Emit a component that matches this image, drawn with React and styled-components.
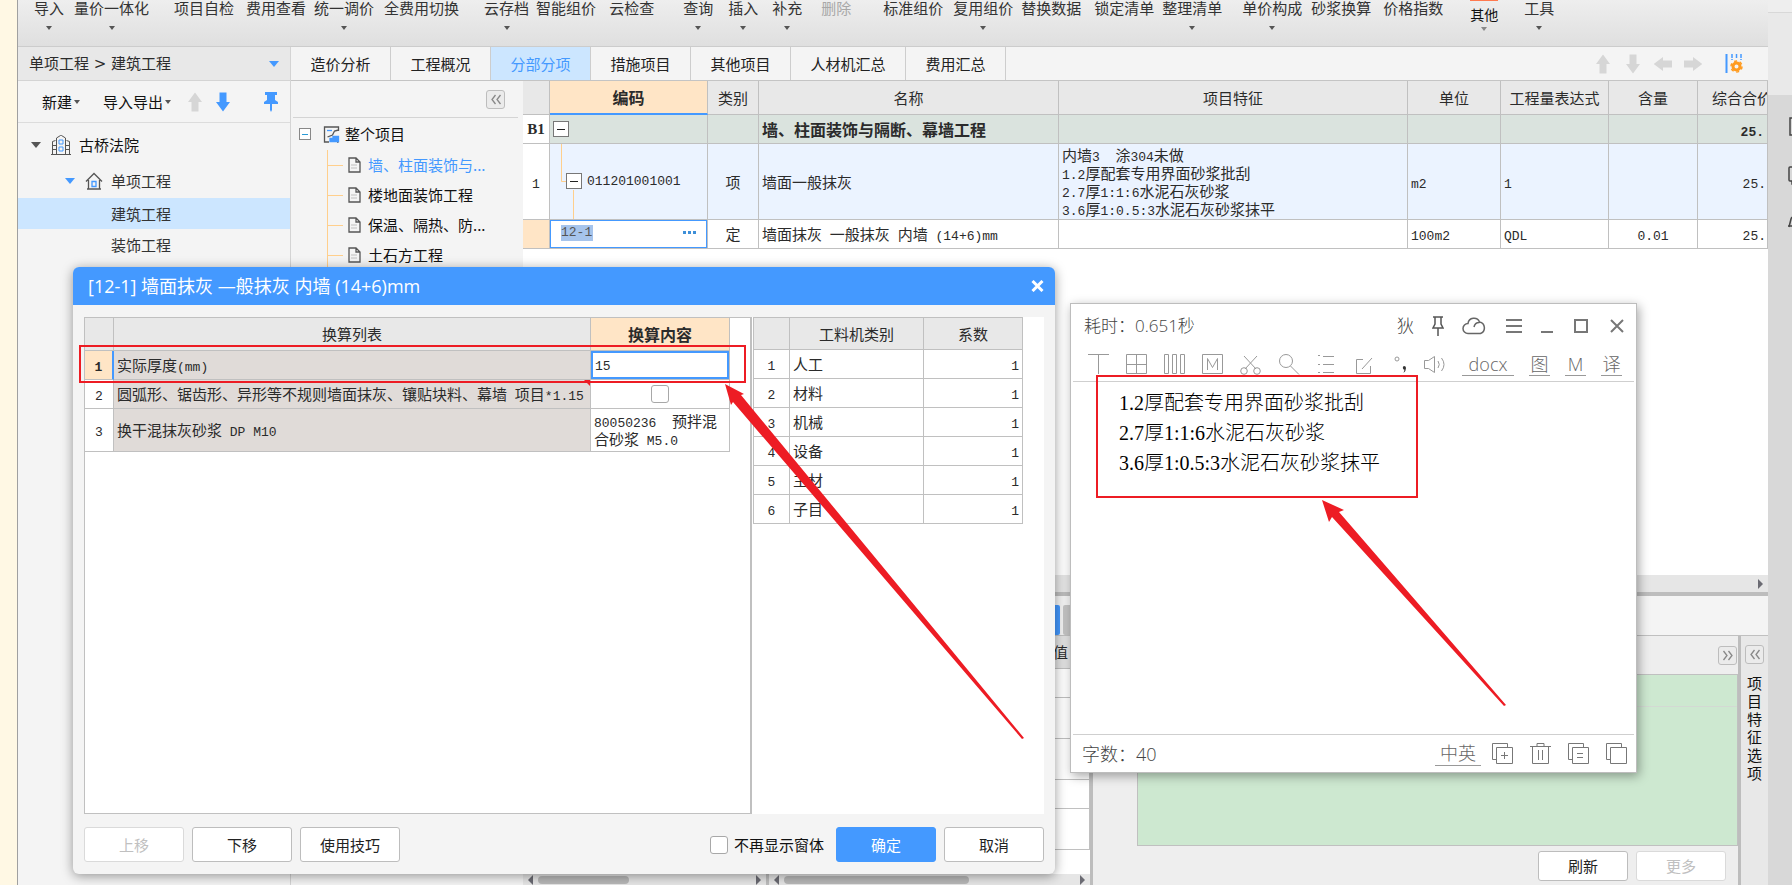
import React from "react";
import styled, { createGlobalStyle, css } from "styled-components";

const BLUE = "#4499ff";
const LINE = "#c0c0c0";
const UI = `"Noto Sans CJK SC", sans-serif`;

const Global = createGlobalStyle`
  *, *::before, *::after { box-sizing: border-box; }
  body { margin: 0; background: #f4f4f4; font-family: ${UI}; font-size: 15px; line-height: 18px; color: #2b2b2b; }
  button, input, select, textarea { font: inherit; color: inherit; margin: 0; }
  button { padding: 0; border: 0; background: none; white-space: nowrap; cursor: pointer; }
  ul { list-style: none; margin: 0; padding: 0; }
  svg { display: block; flex: none; }
`;

/* ---------- shell ---------- */

const Page = styled.div`
  position: relative;
  display: flex;
  min-height: 100vh;
  overflow: hidden;
`;
const CreamEdge = styled.div`
  flex: none;
  width: 18px;
  background: #fff8e4;
  border-right: 1px solid #a0a0a0;
`;
const Shell = styled.div`
  flex: 1;
  min-width: 0;
  display: flex;
  flex-direction: column;
`;
const Body = styled.div`
  flex: 1;
  display: flex;
  min-height: 0;
`;
const RightColumn = styled.div`
  flex: 1;
  min-width: 0;
  display: flex;
  flex-direction: column;
`;
const DesktopEdge = styled.aside`
  flex: none;
  width: 24px;
  background: #d8d8d8;
  overflow: hidden;
`;
const EdgeTop = styled.div`
  height: 13px;
  background: #eeeeee;
  border-bottom: 1px solid #d8d8d8;
`;
const EdgeMid = styled.div`
  height: 82px;
  background: #e9e9e9;
  margin-bottom: 22px;
`;
const EdgeIcon = styled.div`
  height: 49px;
  padding-left: 20px;
`;

/* ---------- ribbon ---------- */

const Ribbon = styled.header`
  display: flex;
  align-items: flex-start;
  height: 47px;
  padding-left: 16px;
  background: linear-gradient(#eeeeee, #dfdfdf);
  border-bottom: 1px solid #cccccc;
`;
const RibbonButton = styled.button`
  flex: none;
  display: flex;
  flex-direction: column;
  align-items: center;
  gap: 10px;
  margin-left: ${(p) => p.$gap}px;
  line-height: 16px;
  color: ${(p) => (p.disabled ? "#a8a8a8" : "#333")};
`;
const RibbonMore = styled(RibbonButton)`
  font-size: 14px;
  gap: 5px;
  color: #111;
  border-top: 1px solid #ff7a50;
  padding-top: 5px;
`;
const Caret = styled.i`
  width: 0;
  height: 0;
  border: ${(p) => p.$size || 3}px solid transparent;
  border-top: ${(p) => (p.$size || 3) + 1}px solid ${(p) => p.$color || "#555"};
  border-bottom: 0;
`;

const tools = [
  ["导入", 0, 1], ["量价一体化", 10, 1], ["项目自检", 25], ["费用查看", 12], ["统一调价", 8, 1],
  ["全费用切换", 10], ["云存档", 25, 1], ["智能组价", 7], ["云检查", 13], ["查询", 29, 1],
  ["插入", 15, 1], ["补充", 14, 1], ["删除", 19], ["标准组价", 32], ["复用组价", 10, 1],
  ["替换数据", 8], ["锁定清单", 13], ["整理清单", 8, 1], ["单价构成", 20, 1], ["砂浆换算", 9],
  ["价格指数", 12],
];

/* ---------- project panel ---------- */

const ProjectPanel = styled.nav`
  flex: none;
  width: 273px;
  background: #f4f4f4;
  border-right: 1px solid #d4d4d4;
`;
const PathBar = styled.div`
  display: flex;
  align-items: center;
  height: 34px;
  padding: 0 11px;
  background: #e8e8e8;
  border-bottom: 1px solid #d4d4d4;
`;
const PathSelect = styled.select`
  flex: 1;
  appearance: none;
  border: 0;
  padding: 0;
  background: none;
  outline: 0;
  && { font-family: "DejaVu Sans", ${UI}; }
`;
const ProjectTools = styled.div`
  display: flex;
  align-items: center;
  height: 42px;
  padding: 0 11px 0 24px;
  border-bottom: 1px solid #dcdcdc;
`;
const MenuButton = styled.button`
  display: flex;
  align-items: center;
  gap: 2px;
  margin-right: ${(p) => p.$after}px;
  color: #111;
`;
const IconButton = styled.button`
  display: flex;
  margin-left: ${(p) => p.$gap || 0}px;
`;
const ProjectTree = styled.ul`
  padding-top: 3px;
`;
const ProjectNode = styled.li`
  display: flex;
  align-items: center;
  height: ${(p) => p.$height}px;
  padding-left: ${(p) => p.$indent}px;
  background: ${(p) => (p.$selected ? "#cce6ff" : "transparent")};
  color: ${(p) => (p.$dark ? "#111" : "#333")};
  svg { margin: 0 8px 0 10px; }
`;

/* ---------- tabs ---------- */

const TabRow = styled.div`
  display: flex;
  height: 34px;
  background: #f4f4f4;
  border-bottom: 1px solid #c4c4c4;
`;
const Tab = styled.button`
  flex: none;
  width: ${(p) => (p.$wide ? 115 : 100)}px;
  border-right: 1px solid #cdcdcd;
  color: ${(p) => (p.$active ? BLUE : "#222")};
  background: ${(p) => (p.$active ? "#cce6ff" : "transparent")};
`;
const TabTools = styled.div`
  display: flex;
  align-items: center;
  gap: 12px;
  margin-left: auto;
  padding-right: 25px;
`;

/* ---------- section tree ---------- */

const Content = styled.div`
  flex: 1;
  display: flex;
  min-height: 0;
`;
const SectionPanel = styled.nav`
  flex: none;
  width: 232px;
  padding: 0 5px 0 2px;
  background: #f4f4f4;
`;
const SectionHead = styled.div`
  display: flex;
  align-items: center;
  justify-content: flex-end;
  height: 37px;
  padding-right: 13px;
  border-bottom: 1px solid #d4d4d4;
`;
const Chevron = styled.button`
  flex: none;
  display: grid;
  place-items: center;
  width: 19px;
  height: 19px;
  border: 1px solid #bdbdbd;
  border-radius: 3px;
  background: #ebebeb;
`;
const SectionRoot = styled.div`
  display: flex;
  align-items: center;
  height: 32px;
  padding-left: 6px;
  color: #111;
  svg + svg { margin: 0 5px 0 12px; }
`;
const SectionList = styled.ul`
  margin-left: 34px;
  border-left: 1px solid #ffcf8c;
`;
const SectionItem = styled.li`
  display: flex;
  align-items: center;
  height: 30px;
  color: ${(p) => (p.$active ? BLUE : "#111")};
  white-space: nowrap;
  &::before { content: ""; width: 15px; height: 1px; background: #ffcf8c; }
  svg { margin: 0 7px 0 5px; }
`;

/* ---------- main grid ---------- */

const Workspace = styled.main`
  flex: 1;
  min-width: 0;
  display: flex;
  flex-direction: column;
  background: #fff;
`;
const GridArea = styled.div`
  flex: 1;
  overflow: hidden;
`;
const Grid = styled.table`
  width: 100%;
  table-layout: fixed;
  border-collapse: separate;
  border-spacing: 0;
`;
const cell = css`
  height: ${(p) => p.$h || 29}px;
  padding: 0 ${(p) => (p.$pad === undefined ? 3 : p.$pad)}px;
  border-right: 1px solid ${LINE};
  border-bottom: 1px solid ${LINE};
  font-weight: ${(p) => (p.$bold ? 700 : 400)};
  font-size: ${(p) => (p.$bold ? 16 : 15)}px;
  text-align: ${(p) => p.$align || "left"};
  white-space: nowrap;
  overflow: hidden;
  background: ${(p) => p.$bg || "transparent"};
`;
const Th = styled.th`
  ${cell}
  ${(p) => p.$active && css`border-bottom: 2px solid ${BLUE};`}
`;
const Td = styled.td`${cell}`;
const SectionMark = styled(Td)`
  font-family: "Liberation Serif", serif;
  font-size: 15px;
`;
const Half = styled.span`
  font-family: "Liberation Mono", monospace;
  font-size: 13px;
  line-height: 1;
  white-space: pre;
`;
const Line = styled.div`
  height: 18px;
  line-height: 18px;
`;
const CodeCell = styled.div`
  display: flex;
  height: ${(p) => p.$h}px;
  padding-left: ${(p) => p.$indent}px;
  align-items: center;
  gap: 5px;
`;
const EditCell = styled.div`
  display: flex;
  align-items: center;
  height: 28px;
  padding: 0 9px 3px 10px;
  border: 1px solid ${BLUE};
  input {
    width: 32px;
    height: 16px;
    padding: 0;
    border: 0;
    outline: 0;
    background: #a6c4ec;
    font: 13px/16px "Liberation Mono", monospace;
    color: #555;
  }
  button { display: flex; margin-left: auto; }
`;

/* Sets Latin runs in the half-width face and leaves Chinese in the UI face. */
const Mixed = ({ children }) =>
  children.split(/([\x20-\x7e]+)/).filter(Boolean).map((t, i) =>
    /^[\x20-\x7e]/.test(t) ? <Half key={i}>{t}</Half> : t
  );

/* ---------- scroll bars and dock ---------- */

const ScrollBar = styled.div`
  flex: none;
  display: flex;
  align-items: center;
  height: ${(p) => p.$h}px;
  padding: 0 5px;
  background: #e6e6e6;
`;
const ScrollArrow = styled.i`
  width: 0;
  height: 0;
  border: 5px solid transparent;
  ${(p) => (p.$left ? "border-right-color: #6b6b73; border-left: 0;" : "border-left-color: #6b6b73; border-right: 0; margin-left: auto;")}
`;
const Thumb = styled.i`
  width: ${(p) => p.$w}px;
  height: 8px;
  margin-left: 5px;
  border-radius: 4px;
  background: #b8b8b8;
`;
const Splitter = styled.div`
  flex: none;
  height: 4px;
  background: #bdbdbd;
`;
const Dock = styled.section`
  flex: none;
  display: flex;
  flex-direction: column;
  height: 289px;
  background: #eeeeee;
`;
const DockTabs = styled.div`
  display: flex;
  align-items: flex-end;
  gap: 3px;
  height: 40px;
  padding-left: 437px;
  background: #f4f4f4;
  border-bottom: 1px solid ${LINE};
`;
const DockTab = styled.button`
  width: 100px;
  height: 30px;
  border-radius: 2px;
  background: ${(p) => (p.$active ? BLUE : "#c4c4c4")};
`;
const DockBody = styled.div`
  flex: 1;
  display: flex;
  min-height: 0;
`;
const DockList = styled.div`
  flex: none;
  display: flex;
  flex-direction: column;
  width: ${(p) => p.$w}px;
  border-right: 3px solid #bdbdbd;
  background: #fff;
`;
const DockRows = styled.div`
  flex: 1;
  overflow: hidden;
`;
const FeaturePane = styled.div`
  flex: 1;
  display: flex;
  flex-direction: column;
  padding-left: 44px;
`;
const FeatureHead = styled.div`
  display: flex;
  align-items: center;
  justify-content: flex-end;
  height: 38px;
  padding-right: 1px;
`;
const GreenArea = styled.div`
  flex: 1;
  border: 1px solid ${LINE};
  background: #cde8d0;
`;
const GreenRow = styled.div`
  height: 32px;
  border-bottom: 1px solid #d3d9d3;
`;
const FeatureFoot = styled.div`
  display: flex;
  align-items: center;
  justify-content: flex-end;
  gap: 8px;
  height: 39px;
  padding-right: 12px;
`;
const SideTab = styled.div`
  flex: none;
  display: flex;
  flex-direction: column;
  align-items: center;
  gap: 10px;
  width: 30px;
  padding-top: 9px;
  border-left: 3px solid #bdbdbd;
  background: #e8e8e8;
`;
const VerticalLabel = styled.button`
  width: 16px;
  white-space: normal;
  color: #111;
`;

/* ---------- conversion dialog ---------- */

const Dialog = styled.section`
  position: absolute;
  left: 73px;
  top: 267px;
  width: 982px;
  border-radius: 6px;
  background: #f4f4f4;
  box-shadow: 0 2px 12px rgba(0, 0, 0, 0.4);
  overflow: hidden;
`;
const DialogTitle = styled.header`
  display: flex;
  align-items: center;
  justify-content: space-between;
  height: 38px;
  padding: 0 11px 0 15px;
  background: ${BLUE};
  color: #fff;
  h2 {
    margin: 0;
    font: 400 18px/24px "Open Sans", ${UI};
  }
`;
const DialogBody = styled.div`
  display: flex;
  height: 497px;
  margin: 12px 11px 0;
  background: #fff;
`;
const LeftPane = styled.div`
  width: 668px;
  border: 1px solid ${LINE};
  border-right-width: 2px;
  table { width: 645px; }
`;
const RightPane = styled.div`
  width: 271px;
  padding-left: 1px;
  table { border-top: 1px solid ${LINE}; border-left: 1px solid ${LINE}; }
`;
const RowMark = styled(Td)`
  ${(p) => p.$current && css`
    background: #ffe5c6;
    border-right: 2px solid ${BLUE};
    span { font-weight: 700; }
  `}
`;
const ListTd = styled(Td)`
  background: #e0dbd8;
  position: relative;
`;
const NoteCorner = styled.i`
  position: absolute;
  top: 0;
  right: 0;
  border: 3px solid transparent;
  border-top-color: #ed1c24;
  border-right-color: #ed1c24;
`;
const ValueInput = styled.input`
  display: block;
  width: 100%;
  height: 28px;
  padding: 2px 2px 0;
  border: 2px solid ${BLUE};
  outline: 0;
  background: #fff;
  && { font: 13px/18px "Liberation Mono", monospace; }
`;
const Check = styled.input`
  appearance: none;
  flex: none;
  display: block;
  width: 18px;
  height: 18px;
  border: 1px solid #a8a8a8;
  border-radius: 3px;
  background: #fff;
  td & { margin: 0 auto; }
`;
const DialogFoot = styled.footer`
  display: flex;
  align-items: center;
  gap: 8px;
  padding: 13px 11px 12px;
`;
const Button = styled.button`
  width: ${(p) => p.$w || 100}px;
  height: ${(p) => p.$h || 35}px;
  border: 1px solid ${(p) => (p.$primary ? BLUE : p.disabled ? "#dadada" : "#bdbdbd")};
  border-radius: 3px;
  background: ${(p) => (p.$primary ? BLUE : "#fff")};
  color: ${(p) => (p.$primary ? "#fff" : p.disabled ? "#c0c0c0" : "#222")};
`;
const CheckLabel = styled.label`
  display: flex;
  align-items: center;
  gap: 6px;
  margin: 0 4px 0 auto;
  color: #111;
`;

/* ---------- recognition window ---------- */

const OcrWindow = styled.section`
  position: absolute;
  left: 1070px;
  top: 303px;
  width: 567px;
  border: 1px solid #bdbdbd;
  background: #fff;
  color: #444;
  box-shadow: 2px 3px 10px rgba(0, 0, 0, 0.35);
  font: 300 17px/22px "Open Sans", ${UI};
`;
const OcrTitle = styled.header`
  display: flex;
  align-items: center;
  height: 43px;
  padding: 0 12px 0 13px;
  > span { margin-right: auto; }
`;
const OcrTitleTools = styled.div`
  display: flex;
  align-items: center;
  gap: 18px;
`;
const OcrTools = styled.div`
  display: flex;
  align-items: center;
  gap: 16px;
  height: 35px;
  margin: 0 2px;
  padding: 0 14px 0 15px;
  border-bottom: 1px solid #cfcfcf;
`;
const OcrTextTools = styled.div`
  display: flex;
  gap: 15px;
  margin-left: auto;
`;
const OcrTextButton = styled.button`
  width: ${(p) => p.$w}px;
  height: 24px;
  border-bottom: 1px solid #999;
  font-size: 18px;
  color: #666;
`;
const OcrText = styled.textarea`
  display: block;
  width: 100%;
  height: 352px;
  padding: 6px 48px;
  border: 0;
  outline: 0;
  resize: none;
  background: transparent;
  color: #000;
  && { font: 300 20px/30px "Liberation Serif", "Noto Sans CJK SC", serif; }
`;
const OcrFoot = styled.footer`
  display: flex;
  align-items: center;
  gap: 11px;
  height: 38px;
  margin: 0 2px;
  padding: 0 7px 0 9px;
  border-top: 1px solid #cfcfcf;
  font-size: 18px;
  > span { margin-right: auto; }
`;
const FootIcons = styled.div`
  display: flex;
  gap: 17px;
`;

const Annotations = styled.svg`
  position: absolute;
  left: 0;
  top: 0;
  pointer-events: none;
`;

/* ---------- icons ---------- */

const Svg = ({ w = 20, h = 20, stroke = "#777", children, sw = 1 }) => (
  <svg width={w} height={h} viewBox={`0 0 ${w} ${h}`} fill="none" stroke={stroke} strokeWidth={sw} aria-hidden="true">
    {children}
  </svg>
);
const ArrowIcon = ({ dir = 0, color = "#d6d6d6" }) => (
  <svg width="18" height="20" viewBox="-9 -10 18 20" aria-hidden="true">
    <path transform={`rotate(${dir})`} d="M0-9.5 7 0H3.5V9.500H-3.500V0H-7Z" fill={color} />
  </svg>
);
const PinIcon = () => (
  <svg width="16" height="20" viewBox="0 0 16 20" fill={BLUE} aria-hidden="true">
    <path d="M2 0h12v3h-2v5l3 2v2H9v6l-1 2-1-2v-6H1v-2l3-2V3H2Z" />
  </svg>
);
const BuildingIcon = () => (
  <Svg w={20} h={20} stroke="#555">
    <path d="M5.500 19V3l4-2.500h1l4 2.500v16M1.500 19V6.500l3-1M18.500 19V6.500l-3-1M0 19.500h20M2 10.500h3M2 14.500h3M15 10.500h3M15 14.500h3" />
    <path d="M8 5h4v4H8zM8 12h4v4H8z" stroke={BLUE} />
  </Svg>
);
const HouseIcon = () => (
  <Svg w={18} h={18} stroke="#555" sw={1.3}>
    <path d="M1 9.500 9 1.500l8 8M3.500 8v9h11V8M2 17h14" />
    <path d="M7 9.500h4v5H7z" stroke={BLUE} />
  </Svg>
);
const ProjectIcon = () => (
  <Svg w={17} h={17} stroke="#555" sw={1.3}>
    <path d="M14 16h1.500M15.500 5V1H1.500v15H6M15.500 4l-4 1-2 4-5 2" />
    <path d="M4 4.500h5" stroke={BLUE} />
    <path d="M7 15.500v-3h3v-2h5.500v5Z" fill={BLUE} stroke={BLUE} />
  </Svg>
);
const DocIcon = () => (
  <Svg w={13} h={16} stroke="#555" sw={1.3}>
    <path d="M1 1h7l4 4v10H1zM8 1v4h4" />
    <path d="M3 8h6M3 11h6" stroke="#d0d0d0" />
  </Svg>
);
const MinusBox = ({ s = 16, color = "#777", mark = "#222" }) => (
  <Svg w={s} h={s} stroke={color}>
    <rect x=".5" y=".5" width={s - 1} height={s - 1} fill="#fff" />
    <path d={`M${s / 4} ${Math.floor(s / 2)}.5H${s - s / 4}`} stroke={mark} />
  </Svg>
);
const ChevronIcon = ({ right }) => (
  <Svg w={12} h={11} stroke="#888" sw={1.3}>
    <path d={right ? "M1.500 1 5 5.500 1.500 10M6.500 1 10 5.500 6.500 10" : "M5.500 1 2 5.500 5.500 10M10.500 1 7 5.500 10.500 10"} />
  </Svg>
);
const ColumnsGear = () => (
  <Svg w={18} h={20} stroke={BLUE}>
    <path d="M1.500 0v19" strokeWidth="2" />
    <path d="M7 0v6M11.500 0v4M16 0v6" strokeWidth="1.500" strokeDasharray="4 1" />
    <circle cx="11.500" cy="12.500" r="3.500" stroke="#ff9b1f" strokeWidth="3" />
    <circle cx="11.500" cy="12.500" r="5.500" stroke="#ff9b1f" strokeWidth="1.500" strokeDasharray="3 2.700" />
  </Svg>
);

const mainColumns = [
  ["", 27], ["编码", 158], ["类别", 51], ["名称", 300], ["项目特征", null],
  ["单位", 93], ["工程量表达式", 108], ["含量", 89], ["综合合价", 70],
];
const GREEN = "#dae3de";
const PALE = "#ebf3ff";

function MainGrid() {
  return (
    <Grid>
      <colgroup>
        {mainColumns.map(([n, w]) => <col key={n} style={w ? { width: w } : undefined} />)}
      </colgroup>
      <thead>
        <tr>
          {mainColumns.map(([n], i) => (
            <Th key={n} $h={34} $align={i === 8 ? "left" : "center"} $pad={i === 8 ? 14 : 0}
              $bold={i === 1} $active={i === 1} $bg={i === 1 ? "#ffe5c6" : "#e8e8e8"}>{n}</Th>
          ))}
        </tr>
      </thead>
      <tbody>
        <tr>
          <SectionMark $align="center" $bold $pad={0}>B1</SectionMark>
          <Td $bg={GREEN} $pad={0}><CodeCell $h={28} $indent={3}><MinusBox /></CodeCell></Td>
          <Td $bg={GREEN} />
          <Td $bg={GREEN} $bold>墙、柱面装饰与隔断、幕墙工程</Td>
          <Td $bg={GREEN} /><Td $bg={GREEN} /><Td $bg={GREEN} /><Td $bg={GREEN} />
          <Td $bg={GREEN} $align="right" $bold><Mixed>25.</Mixed></Td>
        </tr>
        <tr>
          <Td $h={76} $align="center" $pad={0}><Half>1</Half></Td>
          <Td $bg={PALE} $pad={0}>
            <CodeCell $h={75} $indent={10}>
              <Svg w={22} h={75} stroke="#ffcf8c">
                <path d="M1.500 0V37.500H7M13.500 46V75" />
                <rect x="6.500" y="29.500" width="15" height="15" fill="#fff" stroke="#777" />
                <path d="M10 37.500h8" stroke="#222" />
              </Svg>
              <Half>011201001001</Half>
            </CodeCell>
          </Td>
          <Td $bg={PALE} $align="center">项</Td>
          <Td $bg={PALE}>墙面一般抹灰</Td>
          <Td $bg={PALE}>
            {["内墙3  涂304未做", "1.2厚配套专用界面砂浆批刮", "2.7厚1:1:6水泥石灰砂浆", "3.6厚1:0.5:3水泥石灰砂浆抹平"].map((t) => (
              <Line key={t}><Mixed>{t}</Mixed></Line>
            ))}
          </Td>
          <Td $bg={PALE}><Half>m2</Half></Td>
          <Td $bg={PALE}><Half>1</Half></Td>
          <Td $bg={PALE} />
          <Td $bg={PALE} $align="right" $pad={1}><Half>25.</Half></Td>
        </tr>
        <tr>
          <Td $bg="#ffe5c6" />
          <Td $pad={0}>
            <EditCell>
              <input aria-label="编码" defaultValue="12-1" />
              <button aria-label="更多编码">
                <svg width="14" height="3" fill="#3d8fd8"><path d="M0 0h3v3H0zM5 0h3v3H5zM10 0h3v3h-3z" /></svg>
              </button>
            </EditCell>
          </Td>
          <Td $align="center">定</Td>
          <Td><Mixed>墙面抹灰 一般抹灰 内墙 (14+6)mm</Mixed></Td>
          <Td />
          <Td><Half>100m2</Half></Td>
          <Td><Half>QDL</Half></Td>
          <Td $align="center"><Half>0.01</Half></Td>
          <Td $align="right" $pad={1}><Half>25.</Half></Td>
        </tr>
      </tbody>
    </Grid>
  );
}

function ConversionDialog() {
  return (
    <Dialog role="dialog" aria-labelledby="conv-title">
      <DialogTitle>
        <h2 id="conv-title">[12-1] 墙面抹灰 —般抹灰 内墙 (14+6)mm</h2>
        <button aria-label="关闭"><Svg w={13} h={12} stroke="#fff" sw={3}><path d="M1.500 1l10 10M11.500 1l-10 10" /></Svg></button>
      </DialogTitle>
      <DialogBody>
        <LeftPane>
          <Grid>
            <colgroup><col style={{ width: 29 }} /><col /><col style={{ width: 139 }} /></colgroup>
            <thead>
              <tr>
                <Th $h={33} $bg="#e8e8e8" />
                <Th $h={33} $bg="#e8e8e8" $align="center">换算列表</Th>
                <Th $h={33} $bg="#ffe5c6" $align="center" $bold>换算内容</Th>
              </tr>
            </thead>
            <tbody>
              <tr>
                <RowMark $current $align="center" $pad={0}><Half>1</Half></RowMark>
                <ListTd><Mixed>实际厚度(mm)</Mixed></ListTd>
                <Td $pad={0}><ValueInput aria-label="实际厚度(mm)" defaultValue="15" /></Td>
              </tr>
              <tr>
                <RowMark $align="center" $pad={0}><Half>2</Half></RowMark>
                <ListTd><Mixed>圆弧形、锯齿形、异形等不规则墙面抹灰、镶贴块料、幕墙 项目*1.15</Mixed><NoteCorner /></ListTd>
                <Td><Check type="checkbox" aria-label="项目*1.15" /></Td>
              </tr>
              <tr>
                <RowMark $h={43} $align="center" $pad={0}><Half>3</Half></RowMark>
                <ListTd><Mixed>换干混抹灰砂浆 DP M10</Mixed></ListTd>
                <Td><Line><Mixed>80050236  预拌混</Mixed></Line><Line><Mixed>合砂浆 M5.0</Mixed></Line></Td>
              </tr>
            </tbody>
          </Grid>
        </LeftPane>
        <RightPane>
          <Grid>
            <colgroup><col style={{ width: 36 }} /><col /><col style={{ width: 99 }} /></colgroup>
            <thead>
              <tr>
                <Th $h={32} $bg="#e8e8e8" />
                <Th $h={32} $bg="#e8e8e8" $align="center">工料机类别</Th>
                <Th $h={32} $bg="#e8e8e8" $align="center">系数</Th>
              </tr>
            </thead>
            <tbody>
              {["人工", "材料", "机械", "设备", "主材", "子目"].map((n, i) => (
                <tr key={n}>
                  <Td $align="center"><Half>{i + 1}</Half></Td>
                  <Td>{n}</Td>
                  <Td $align="right"><Half>1</Half></Td>
                </tr>
              ))}
            </tbody>
          </Grid>
        </RightPane>
      </DialogBody>
      <DialogFoot>
        <Button disabled>上移</Button>
        <Button>下移</Button>
        <Button>使用技巧</Button>
        <CheckLabel><Check type="checkbox" />不再显示窗体</CheckLabel>
        <Button $primary>确定</Button>
        <Button>取消</Button>
      </DialogFoot>
    </Dialog>
  );
}

const ocrIcons = [
  ["文本", <path d="M0 1.500h21M10.500 1.500V21" />],
  ["表格", <path d="M.5 1.500h20v19H.5zM10.500 1.500v19M.5 11.500h20" />],
  ["竖排", <path d="M.5 1.500h4v19h-4zM8.500 1.500h4v19h-4zM16.500 1.500h4v19h-4z" />],
  ["公式", <path d="M.5 1.500h20v19H.5zM5.500 17V5.500l5 9 5-9V17" />],
  ["剪切", <><path d="M4 3 16 16M17 3 5 16" /><circle cx="4" cy="18" r="3.300" /><circle cx="17" cy="18" r="3.300" /></>],
  ["查找", <><circle cx="8" cy="8" r="6.500" /><path d="M12.500 13 21 21.500" /></>],
  ["列表", <path d="M2 2.500h2M2 11.500h2M2 19.500h2M7 3.500h11M7 11.500h11M7 19.500h11" />],
  ["编辑", <path d="M9 6.500H2.500v14h14V13M8 16 18 5" />],
];

const pages = <path d="M4.500 16.500H.5V.5h15v4M4.500 4.500h16v16h-16z" />;

function Recognition() {
  return (
    <OcrWindow aria-label="识别结果">
      <OcrTitle>
        <span>耗时：0.651秒</span>
        <OcrTitleTools>
          <button>狄</button>
          <button aria-label="置顶"><Svg w={12} h={20} stroke="#555" sw={1.5}><path d="M1 1h10M3 1v7l-2 4h10l-2-4V1M6 12v8" /></Svg></button>
          <button aria-label="云端"><Svg w={26} h={18} stroke="#666" sw={1.5}><path d="M6 16.500a5 5 0 0 1 0-10 6 6 0 0 1 11.500-1.500 6 6 0 0 1 1 11.500ZM12 10a5.500 5.500 0 0 1 5.500-4.500" /></Svg></button>
          <button aria-label="菜单"><Svg w={17} h={14} stroke="#777" sw={2}><path d="M0 1h16M0 7h16M0 13h16" /></Svg></button>
          <button aria-label="最小化"><Svg w={13} h={14} sw={2}><path d="M0 13h12" /></Svg></button>
          <button aria-label="最大化"><Svg w={20} h={14} sw={2}><path d="M3 1h12v12H3z" /></Svg></button>
          <button aria-label="关闭"><Svg w={14} h={14} sw={2}><path d="M1 1l12 12M13 1 1 13" /></Svg></button>
        </OcrTitleTools>
      </OcrTitle>
      <OcrTools>
        {ocrIcons.map(([n, d]) => <button key={n} aria-label={n}><Svg w={22} h={22} stroke="#999">{d}</Svg></button>)}
        <button aria-label="标点"><Svg w={16} h={22} stroke="#999"><circle cx="5" cy="6" r="2" /><path d="M12 13a2 2 0 0 1 2 2q0 3-2.500 5l1-3.200a2 2 0 0 1-.5-3.800Z" fill="#333" stroke="none" /></Svg></button>
        <button aria-label="朗读"><Svg w={22} h={22} stroke="#999"><path d="M.5 7.500h4l6-4v16l-6-4h-4zM14 8q2.500 3.500 0 7M17.500 5q5 6.500 0 13" /></Svg></button>
        <OcrTextTools>
          <OcrTextButton $w={52}>docx</OcrTextButton>
          <OcrTextButton $w={21}>图</OcrTextButton>
          <OcrTextButton $w={21}>M</OcrTextButton>
          <OcrTextButton $w={21}>译</OcrTextButton>
        </OcrTextTools>
      </OcrTools>
      <OcrText aria-label="识别文本" spellCheck={false}
        defaultValue={"1.2厚配套专用界面砂浆批刮\n2.7厚1:1:6水泥石灰砂浆\n3.6厚1:0.5:3水泥石灰砂浆抹平"} />
      <OcrFoot>
        <span>字数：40</span>
        <OcrTextButton $w={46}>中英</OcrTextButton>
        <FootIcons>
          <button aria-label="追加"><Svg w={21} h={21}>{pages}<path d="M9 12.500h7M12.500 9v7" /></Svg></button>
          <button aria-label="删除"><Svg w={21} h={21}><path d="M0 3.500h21M7 3.500v-3h7v3M2.500 4v16.500h16V4M8.500 7v10M12.500 7v10" /></Svg></button>
          <button aria-label="合并"><Svg w={21} h={21}>{pages}<path d="M9 10.500h6M9 14.500h6" /></Svg></button>
          <button aria-label="复制"><Svg w={21} h={21}>{pages}</Svg></button>
        </FootIcons>
      </OcrFoot>
    </OcrWindow>
  );
}

export default function App() {
  return (
    <Page>
      <Global />
      <CreamEdge />
      <Shell>
        <Ribbon>
          {tools.map(([n, gap, menu]) => (
            <RibbonButton key={n} $gap={gap} disabled={n === "删除"}>{n}{menu && <Caret />}</RibbonButton>
          ))}
          <RibbonMore $gap={27}>其他<Caret $color="#888" /></RibbonMore>
          <RibbonButton $gap={26}>工具<Caret /></RibbonButton>
        </Ribbon>
        <Body>
          <ProjectPanel>
            <PathBar>
              <PathSelect aria-label="当前工程"><option>单项工程 &gt; 建筑工程</option></PathSelect>
              <Caret $size={5} $color={BLUE} />
            </PathBar>
            <ProjectTools>
              <MenuButton $after={23}>新建<Caret /></MenuButton>
              <MenuButton $after={15}>导入导出<Caret /></MenuButton>
              <IconButton aria-label="上移工程"><ArrowIcon /></IconButton>
              <IconButton $gap={10} aria-label="下移工程"><ArrowIcon dir={180} color={BLUE} /></IconButton>
              <IconButton $gap={31} aria-label="固定面板"><PinIcon /></IconButton>
            </ProjectTools>
            <ProjectTree>
              <ProjectNode $height={37} $indent={13} $dark><Caret $size={5} /><BuildingIcon />古桥法院</ProjectNode>
              <ProjectNode $height={35} $indent={47}><Caret $size={5} $color={BLUE} /><HouseIcon />单项工程</ProjectNode>
              <ProjectNode $height={31} $indent={93} $selected>建筑工程</ProjectNode>
              <ProjectNode $height={31} $indent={93}>装饰工程</ProjectNode>
            </ProjectTree>
          </ProjectPanel>
          <RightColumn>
            <TabRow>
              {["造价分析", "工程概况", "分部分项", "措施项目", "其他项目", "人材机汇总", "费用汇总"].map((t) => (
                <Tab key={t} $active={t === "分部分项"} $wide={t === "人材机汇总"}>{t}</Tab>
              ))}
              <TabTools>
                {[["上移", 0], ["下移", 180], ["左移", 270], ["右移", 90]].map(([n, d]) => (
                  <IconButton key={n} aria-label={n}><ArrowIcon dir={d} /></IconButton>
                ))}
                <IconButton $gap={11} aria-label="列设置"><ColumnsGear /></IconButton>
              </TabTools>
            </TabRow>
            <Content>
              <SectionPanel>
                <SectionHead><Chevron aria-label="收起"><ChevronIcon /></Chevron></SectionHead>
                <SectionRoot><MinusBox s={12} color="#888" mark="#2a9ad6" /><ProjectIcon />整个项目</SectionRoot>
                <SectionList>
                  {["墙、柱面装饰与...", "楼地面装饰工程", "保温、隔热、防...", "土石方工程"].map((t, i) => (
                    <SectionItem key={t} $active={i === 0}><DocIcon />{t}</SectionItem>
                  ))}
                </SectionList>
              </SectionPanel>
              <Workspace>
                <GridArea><MainGrid /></GridArea>
                <ScrollBar $h={17}><ScrollArrow /></ScrollBar>
                <Splitter />
                <Dock>
                  <DockTabs>
                    <DockTab $active aria-label="特征及内容" />
                    <DockTab aria-label="组价方案" />
                  </DockTabs>
                  <DockBody>
                    <DockList $w={246}>
                      <DockRows />
                      <ScrollBar $h={11}><ScrollArrow $left /><Thumb $w={91} /><ScrollArrow /></ScrollBar>
                    </DockList>
                    <DockList $w={324}>
                      <DockRows>
                        <Grid>
                          <colgroup><col style={{ width: 283 }} /><col /></colgroup>
                          <thead><tr><Th $h={33} $bg="#e2e2e2" /><Th $h={33} $pad={1} $bg="#e2e2e2">值</Th></tr></thead>
                          <tbody>
                            {[29, 41, 41, 29, 41].map((h, i) => <tr key={i}><Td $h={h} /><Td $h={h} /></tr>)}
                          </tbody>
                        </Grid>
                      </DockRows>
                      <ScrollBar $h={11}><ScrollArrow $left /><Thumb $w={185} /><ScrollArrow /></ScrollBar>
                    </DockList>
                    <FeaturePane>
                      <FeatureHead><Chevron aria-label="展开"><ChevronIcon right /></Chevron></FeatureHead>
                      <GreenArea><GreenRow /></GreenArea>
                      <FeatureFoot>
                        <Button $w={90} $h={30}>刷新</Button>
                        <Button $w={90} $h={30} disabled>更多</Button>
                      </FeatureFoot>
                    </FeaturePane>
                    <SideTab>
                      <Chevron aria-label="收起选项"><ChevronIcon /></Chevron>
                      <VerticalLabel>项目特征选项</VerticalLabel>
                    </SideTab>
                  </DockBody>
                </Dock>
              </Workspace>
            </Content>
          </RightColumn>
        </Body>
      </Shell>
      <DesktopEdge>
        <EdgeTop />
        <EdgeMid />
        <EdgeIcon><Svg w={20} h={20} stroke="#444" sw={1.5}><path d="M2 1h16v17H2z" /></Svg></EdgeIcon>
        <EdgeIcon><Svg w={20} h={20} stroke="#444" sw={1.5}><path d="M18 1H2q-1 0-1 1v12q0 1 1 1h2v3h4" /></Svg></EdgeIcon>
        <EdgeIcon><Svg w={20} h={20} stroke="#444" sw={1.5}><path d="M1 12 3 4q.5-2 2-2h10M0 11h6" /></Svg></EdgeIcon>
      </DesktopEdge>
      <ConversionDialog />
      <Recognition />
      <Annotations width="1792" height="885" fill="none" stroke="#ed1c24" strokeWidth="2" aria-hidden="true">
        <path d="M80 346h665v36H80zM1097 376h320v121h-320z" />
        <path d="M725 384 744 394 741 395 1024 738 1022 739 733 402 731 405ZM1322 500 1344 510 1339 512 1506 705 1504 706 1332 517 1329 522Z" fill="#ed1c24" stroke="none" />
      </Annotations>
    </Page>
  );
}
